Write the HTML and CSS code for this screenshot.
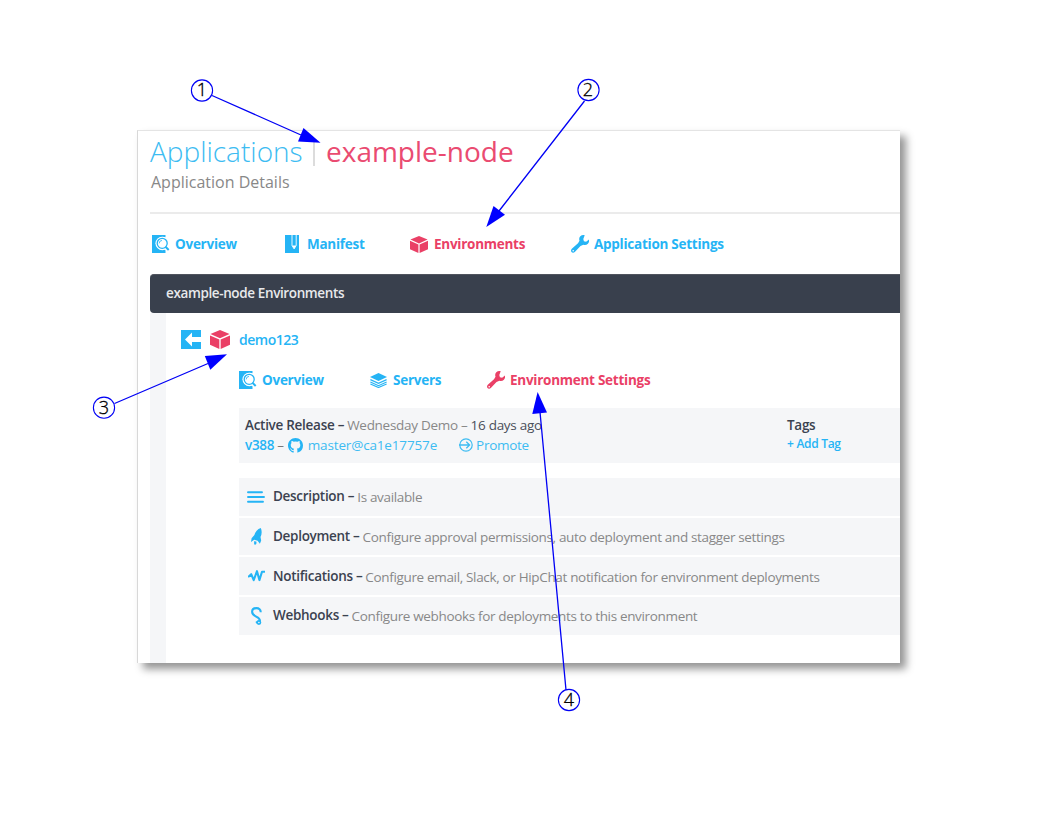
FILE: index.html
```html
<!DOCTYPE html>
<html lang="en">
<head>
<meta charset="utf-8">
<title>Application Details</title>
<link rel="stylesheet" href="styles.css">
</head>
<body>
<svg class="defs" width="0" height="0">
  <symbol id="overview" viewBox="0 0 18 18">
    <path fill="currentColor" d="M0 0h13.5v2.2A6.8 6.8 0 0 0 5 11.5a6.8 6.8 0 0 0 8 3.2l.5.8V18H0z"/>
    <circle cx="10" cy="8.3" r="6.6" fill="#fff"/>
    <circle cx="10.2" cy="8.3" r="5" fill="none" stroke="currentColor" stroke-width="1.3"/>
    <path d="M7.2 8.4a3 3 0 0 1 2.8-3" fill="none" stroke="currentColor" stroke-width=".8"/>
    <path d="M13.5 11.8l3.2 3.2" stroke="currentColor" stroke-width="2"/>
  </symbol>
  <symbol id="manifest" viewBox="0 0 14 18">
    <path fill="currentColor" d="M0 0h14v18H0z"/>
    <path d="M7 0v10.500l2.100 3.400 2.100-3.400V0" fill="none" stroke="#fff" stroke-width=".9"/>
    <path d="M7 10.500h4.200l-2.100 3.300z" fill="#fff"/>
  </symbol>
  <symbol id="cube" viewBox="0 0 18 17">
    <path fill="currentColor" d="M9 0l8.6 3.6L9 7.4.4 3.6zM0 4.8l8.4 3.7V17L0 13.2zM18 4.8L9.6 8.5V17l8.4-3.8z"/>
  </symbol>
  <symbol id="wrench" viewBox="0 0 18 18">
    <path fill="currentColor" d="M13.700.3c-1.400-.6-3.200-.2-4.400 1C8.100 2.500 7.900 4.200 8.500 5.800L7 8.200.8 13.700c-1 1-1 2.500-.3 3.400.8.9 2.400.9 3.300-.1l5.700-6 2.900-1.300c1.600.6 3.300.2 4.500-1 1.100-1.200 1.500-2.700 1.100-4.200l-2.900 2.300-2.200-.5-.6-2.300z"/>
    <circle cx="2.200" cy="15.700" r=".8" fill="#fff"/>
  </symbol>
  <symbol id="back" viewBox="0 0 20 19">
    <path fill="currentColor" d="M0 0h20v7h-9V2.600L4 9.500l7 6.900V12h9v7H0z"/>
  </symbol>
  <symbol id="layers" viewBox="0 0 17 15">
    <path fill="currentColor" d="M8.500 0L17 4 8.500 8 0 4z"/>
    <path d="M.4 6.600l8.100 3.700 8.100-3.700M.4 9l8.100 3.700L16.600 9M.4 11l8.100 3.500 8.100-3.500" fill="none" stroke="currentColor" stroke-width="1.200"/>
  </symbol>
  <symbol id="github" viewBox="0 0 16 16">
    <path fill="currentColor" d="M8 0C3.580 0 0 3.580 0 8c0 3.540 2.290 6.530 5.470 7.590.4.070.55-.17.55-.38 0-.19-.01-.82-.01-1.490-2.010.37-2.530-.49-2.690-.94-.09-.23-.48-.94-.82-1.130-.28-.15-.68-.52-.01-.53.63-.01 1.080.58 1.230.82.72 1.210 1.870.87 2.330.66.070-.52.28-.87.51-1.070-1.780-.2-3.640-.89-3.640-3.950 0-.87.31-1.590.82-2.150-.08-.2-.36-1.020.08-2.120 0 0 .67-.21 2.200.82a7.600 7.600 0 0 1 4 0c1.530-1.040 2.200-.82 2.200-.82.44 1.100.16 1.920.08 2.120.51.56.82 1.270.82 2.150 0 3.070-1.870 3.750-3.650 3.950.29.25.54.73.54 1.480 0 1.070-.01 1.930-.01 2.200 0 .21.15.46.55.38A8 8 0 0 0 16 8c0-4.420-3.580-8-8-8z"/>
  </symbol>
  <symbol id="promote" viewBox="0 0 14 14">
    <circle cx="7" cy="7" r="6.200" fill="none" stroke="currentColor" stroke-width="1.200"/>
    <path d="M0 7h10.500M7.300 3.700L10.600 7l-3.300 3.300" fill="none" stroke="currentColor" stroke-width="1.300"/>
  </symbol>
  <symbol id="lines" viewBox="0 0 18 12">
    <path d="M1 1.200h14M1 6h16M1 10.800h15" stroke="currentColor" stroke-width="1.900" stroke-linecap="round"/>
  </symbol>
  <symbol id="rocket" viewBox="0 0 11 17">
    <path fill="currentColor" d="M9.800 0C6.500 1 4.200 3.700 3.400 7L.6 10.300 0 14l3.200-2.300 3.400 1 2.300 3.100 1.300-3.400-.7-3.300C11 6 11 2.800 9.800 0z"/>
    <path fill="currentColor" d="M3.300 13l2.200.7-.2 2.200-1.500 1.100-.8-1.700z"/>
  </symbol>
  <symbol id="pulse" viewBox="0 0 17 12">
    <path d="M.8 6.500L3.200 4.200l2.500 6L9 1.200l2.400 8.900 2.600-8.400h2.300" fill="none" stroke="currentColor" stroke-width="2.100" stroke-linejoin="round" stroke-linecap="round"/>
  </symbol>
  <symbol id="hook" viewBox="0 0 11 18">
    <path d="M9.700 5.300C9.800 2.600 8 1.100 5.500 1.100 2.800 1.100 1.100 2.700 1.100 4.700c0 2.600 1.800 3.700 4.100 4.900 2.800 1.400 4 2.800 3.600 4.500" fill="none" stroke="currentColor" stroke-width="2.100"/>
    <circle cx="7.900" cy="15.500" r="1.600" fill="none" stroke="currentColor" stroke-width="1.600"/>
    <path d="M5 14.500l1.200 1.800" stroke="currentColor" stroke-width="1.400"/>
  </symbol>
</svg>

<main class="panel">
  <header class="head">
    <h1 class="title"><span class="title-root">Applications</span><span class="title-sep"></span><span class="title-name">example-node</span></h1>
    <p class="subtitle">Application Details</p>
  </header>
  <nav class="tabs main-tabs">
    <a class="tab"><svg class="i-overview"><use href="#overview"/></svg><span>Overview</span></a>
    <a class="tab"><svg class="i-manifest"><use href="#manifest"/></svg><span>Manifest</span></a>
    <a class="tab active"><svg class="i-cube"><use href="#cube"/></svg><span>Environments</span></a>
    <a class="tab"><svg class="i-wrench"><use href="#wrench"/></svg><span>Application Settings</span></a>
  </nav>
  <section class="box">
    <h2 class="bar"><span>example-node Environments</span></h2>
    <div class="content">
      <div class="crumb">
        <svg class="i-back"><use href="#back"/></svg>
        <svg class="i-cube big"><use href="#cube"/></svg>
        <span class="env">demo123</span>
      </div>
      <div class="inner">
        <nav class="tabs sub-tabs">
          <a class="tab"><svg class="i-overview"><use href="#overview"/></svg><span>Overview</span></a>
          <a class="tab"><svg class="i-layers"><use href="#layers"/></svg><span>Servers</span></a>
          <a class="tab active"><svg class="i-wrench"><use href="#wrench"/></svg><span>Environment Settings</span></a>
        </nav>
        <div class="release">
          <div class="release-info">
            <div class="line"><b>Active Release –</b><span class="r-demo">Wednesday Demo –</span><span class="r-age">16 days ago</span></div>
            <div class="line links"><b class="r-ver">v388</b><span class="r-dash">–</span><svg class="i-github"><use href="#github"/></svg><span class="r-hash">master@ca1e17757e</span><svg class="i-promote"><use href="#promote"/></svg><span class="r-prom">Promote</span></div>
          </div>
          <div class="tags"><b>Tags</b><span class="g-add">+ Add Tag</span></div>
        </div>
        <ul class="rows">
          <li class="row"><span class="ic"><svg class="i-lines"><use href="#lines"/></svg></span><b>Description –</b><span class="desc">Is available</span></li>
          <li class="row"><span class="ic"><svg class="i-rocket"><use href="#rocket"/></svg></span><b>Deployment –</b><span class="desc">Configure approval permissions, auto deployment and stagger settings</span></li>
          <li class="row"><span class="ic"><svg class="i-pulse"><use href="#pulse"/></svg></span><b>Notifications –</b><span class="desc">Configure email, Slack, or HipChat notification for environment deployments</span></li>
          <li class="row"><span class="ic"><svg class="i-hook"><use href="#hook"/></svg></span><b>Webhooks –</b><span class="desc">Configure webhooks for deployments to this environment</span></li>
        </ul>
      </div>
    </div>
  </section>
</main>

<svg class="callouts" viewBox="0 0 1056 816">
  <g class="leader">
    <path d="M212 95.500L301 135M584.500 101L499 211M114.500 403.500L208 363.500M566 690L540 412"/>
  </g>
  <g class="arrow">
    <path d="M320.500 142.800L303.500 128 298 141.500z"/>
    <path d="M486.300 227L493.500 206 505 214.800z"/>
    <path d="M227 354.200L204.800 356 210.300 369.800z"/>
    <path d="M537.600 392L532.300 414 547 412.600z"/>
  </g>
  <g class="ring">
    <circle cx="202" cy="90.500" r="10.600"/><circle cx="588.500" cy="90" r="10.600"/><circle cx="104" cy="407.700" r="10.600"/><circle cx="569" cy="700" r="10.600"/>
  </g>
  <g class="num">
    <text x="202" y="96.300">1</text><text x="588" y="96">2</text><text x="104" y="413.800">3</text><text x="569" y="706.200">4</text>
  </g>
</svg>
</body>
</html>
```
FILE: styles.css
```css
* { box-sizing: border-box; }
body { margin: 0; width: 1056px; height: 816px; overflow: hidden; background: #fff; font-family: "Open Sans", "Noto Sans", sans-serif; color: #888; }
h1, h2, p, ul { margin: 0; padding: 0; font-weight: 400; }
ul { list-style: none; }
svg { display: block; flex: none; }
.defs { position: absolute; }
span, b { white-space: nowrap; }

.panel { width: 763px; height: 533px; margin: 130px 0 0 137px; padding-left: 13px; background: #fff; border-top: 1px solid #e4e4e4; border-left: 1px solid #d8d8d8; box-shadow: 6px 6px 8px rgba(0, 0, 0, .42); display: flex; flex-direction: column; }
.head { height: 83px; border-bottom: 2px solid #ebebeb; margin-left: -1px; }
.title { display: flex; align-items: center; height: 40px; font-size: 28px; line-height: 38px; padding-bottom: 1px; }
.title-root { color: #3dbcf2; font-weight: 300; width: 163px; }
.title-sep { width: 2px; height: 25px; margin-top: 6px; background: #dcdcdc; }
.title-name { color: #ea4b71; margin-left: 11px; }
.subtitle { font-size: 16px; line-height: 22px; padding-left: 1px; }

.tabs { display: grid; align-items: center; font-size: 13.500px; letter-spacing: -.26px; font-weight: 700; color: #25b4f5; }
.tab { display: flex; align-items: center; }
.active { color: #ea4066; }
.main-tabs { grid-template-columns: 133px 125px 161px 180px; height: 60px; padding: 0 0 0 1px; }
.i-overview { width: 18px; height: 18px; margin-right: 5px; }
.i-manifest { width: 14px; height: 18px; margin-right: 8px; }
.i-cube { width: 18px; height: 17px; margin-right: 6px; }
.i-wrench { width: 18px; height: 18px; margin-right: 5px; }

.box { flex: 1; margin-left: -1px; display: flex; flex-direction: column; }
.bar { height: 39px; line-height: 37px; padding-left: 16px; font-size: 13.500px; font-weight: 600; letter-spacing: -.38px; color: #e8e9eb; background: #39404d; border-radius: 4px 0 0 4px; border-top: 1px solid #50545e; }
.content { flex: 1; border-left: 16px solid #f5f6f8; padding: 15px 0 0 15px; }
.crumb { display: flex; align-items: center; height: 22px; }
.i-back { width: 20px; height: 19px; }
.i-cube.big { color: #ea4066; width: 20px; height: 19px; margin: 0 9px 0 9px; }
.i-back, .env { color: #25b4f5; }
.env { font-size: 14px; font-weight: 600; letter-spacing: -.5px; }
.inner { margin-left: 58px; }
.sub-tabs { grid-template-columns: 131px 117px 200px; height: 58px; padding-top: 2px; }
.i-layers { width: 17px; height: 15px; margin-right: 6px; }

.release { display: flex; height: 55px; background: #f5f6f8; padding: 7px 0 0 6px; font-size: 13.500px; letter-spacing: -.28px; }
.release-info { width: 542px; }
.line { display: flex; align-items: center; height: 20px; }
b { font-weight: 600; color: #3b4250; }
.r-demo { margin-left: 3px; }
.r-age { margin-left: 3px; color: #4a4f5a; }
.links { color: #3dbcf2; }
.r-ver { color: #25b4f5; }
.r-dash { margin-left: 3px; color: #777; }
.i-github { width: 15px; height: 15px; margin: 0 5px 0 4px; color: #25b4f5; }
.r-hash { letter-spacing: -.15px; }
.i-promote { width: 14px; height: 14px; margin: 0 3px 0 22px; }
.tags { display: flex; flex-direction: column; }
.tags b { height: 20px; line-height: 20px; }
.g-add { font-size: 12px; font-weight: 600; letter-spacing: -.3px; line-height: 17px; color: #25b4f5; }

.rows { display: flex; flex-direction: column; gap: 2px; margin-top: 15px; }
.row { display: flex; align-items: center; height: 37.700px; background: #f5f6f8; font-size: 13.500px; letter-spacing: -.3px; }
.row b { margin-top: -1px; }
.ic { width: 34px; display: flex; justify-content: center; color: #25b4f5; }
.desc { margin: 1px 0 0 3px; font-size: 13.500px; letter-spacing: -.34px; }
.i-lines { width: 18px; height: 12px; }
.i-rocket { width: 11px; height: 17px; }
.i-pulse { width: 17px; height: 12px; }
.i-hook { width: 11px; height: 18px; }

.callouts { position: absolute; left: 0; top: 0; width: 1056px; height: 816px; }
.leader { stroke: #0000f5; stroke-width: 1.300; }
.arrow { fill: #0000ff; }
.ring { fill: #fff; stroke: #0000f5; stroke-width: 1.100; }
.num { font: 300 18px "Open Sans", sans-serif; text-anchor: middle; fill: #000; stroke: #000; stroke-width: .35; }
```
